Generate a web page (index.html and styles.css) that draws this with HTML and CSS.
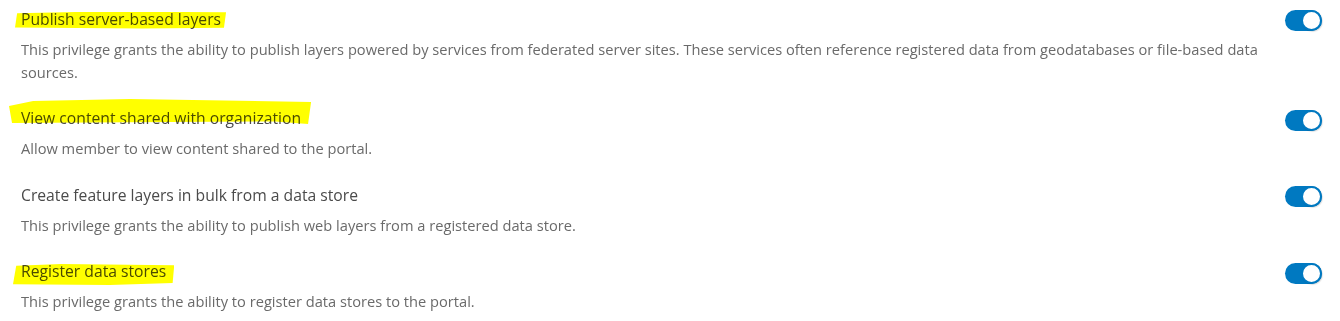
FILE: index.html
```html
<!DOCTYPE html>
<html lang="en">
<head>
<meta charset="utf-8">
<title>Privileges</title>
<link rel="stylesheet" href="styles.css">
</head>
<body>
<div class="list">
  <div class="row">
    <div class="text">
      <div class="title"><span class="hl hl-1">Publish server-based layers</span></div>
      <div class="desc">This privilege grants the ability to publish layers powered by services from federated server sites. These services often reference registered data from geodatabases or file-based data sources.</div>
    </div>
    <span class="switch"><span class="knob"></span></span>
  </div>
  <div class="row">
    <div class="text">
      <div class="title"><span class="hl hl-2">View content shared with organization</span></div>
      <div class="desc">Allow member to view content shared to the portal.</div>
    </div>
    <span class="switch"><span class="knob"></span></span>
  </div>
  <div class="row">
    <div class="text">
      <div class="title">Create feature layers in bulk from a data store</div>
      <div class="desc">This privilege grants the ability to publish web layers from a registered data store.</div>
    </div>
    <span class="switch"><span class="knob"></span></span>
  </div>
  <div class="row">
    <div class="text">
      <div class="title"><span class="hl hl-4">Register data stores</span></div>
      <div class="desc">This privilege grants the ability to register data stores to the portal.</div>
    </div>
    <span class="switch"><span class="knob"></span></span>
  </div>
</div>
</body>
</html>
```

FILE: styles.css
```css
html, body {
  margin: 0;
  padding: 0;
  background: #ffffff;
}

body {
  font-family: "Open Sans", "Noto Sans", sans-serif;
  -webkit-font-smoothing: antialiased;
}

.list {
  display: flex;
  flex-direction: column;
  padding: 8.5px 18px 0 21px;
}

.row {
  display: grid;
  grid-template-columns: 1fr 37px;
  column-gap: 20px;
  padding-bottom: 24.5px;
}

.row:last-child {
  padding-bottom: 0;
}

.text {
  display: flex;
  flex-direction: column;
  gap: 8px;
}

.title {
  font-size: 15.7px;
  line-height: 21px;
  color: #4a4a4a;
}

.desc {
  font-size: 14.65px;
  line-height: 23px;
  color: #6a6a6a;
}

.hl {
  position: relative;
  display: inline-block;
}

.hl::after {
  content: "";
  position: absolute;
  background: #ffff00;
  mix-blend-mode: multiply;
  pointer-events: none;
}

.hl-1::after {
  left: -6px;
  right: -5px;
  top: 3px;
  bottom: 1px;
  clip-path: polygon(1% 10%, 40% 0%, 100% 4%, 99% 96%, 60% 100%, 0% 94%);
}

.hl-2::after {
  left: -12px;
  right: -10px;
  top: -9px;
  bottom: 5px;
  clip-path: polygon(0% 28%, 8% 8%, 40% 0%, 100% 12%, 99% 100%, 88% 90%, 40% 93%, 1% 96%);
}

.hl-4::after {
  left: -8px;
  right: -8px;
  top: 3px;
  bottom: -3px;
  clip-path: polygon(2% 8%, 30% 0%, 100% 6%, 99% 90%, 60% 100%, 0% 96%);
}

.switch {
  position: relative;
  display: block;
  width: 37px;
  height: 21px;
  margin-top: 1.5px;
  border-radius: 11px;
  background: #0079c1;
  box-sizing: border-box;
}

.knob {
  position: absolute;
  right: 0;
  top: 0;
  width: 21px;
  height: 21px;
  border-radius: 50%;
  background: #ffffff;
  border: 2px solid #0079c1;
  box-sizing: border-box;
  box-shadow: 1px 1px 1px rgba(0, 0, 0, 0.12);
}
```
